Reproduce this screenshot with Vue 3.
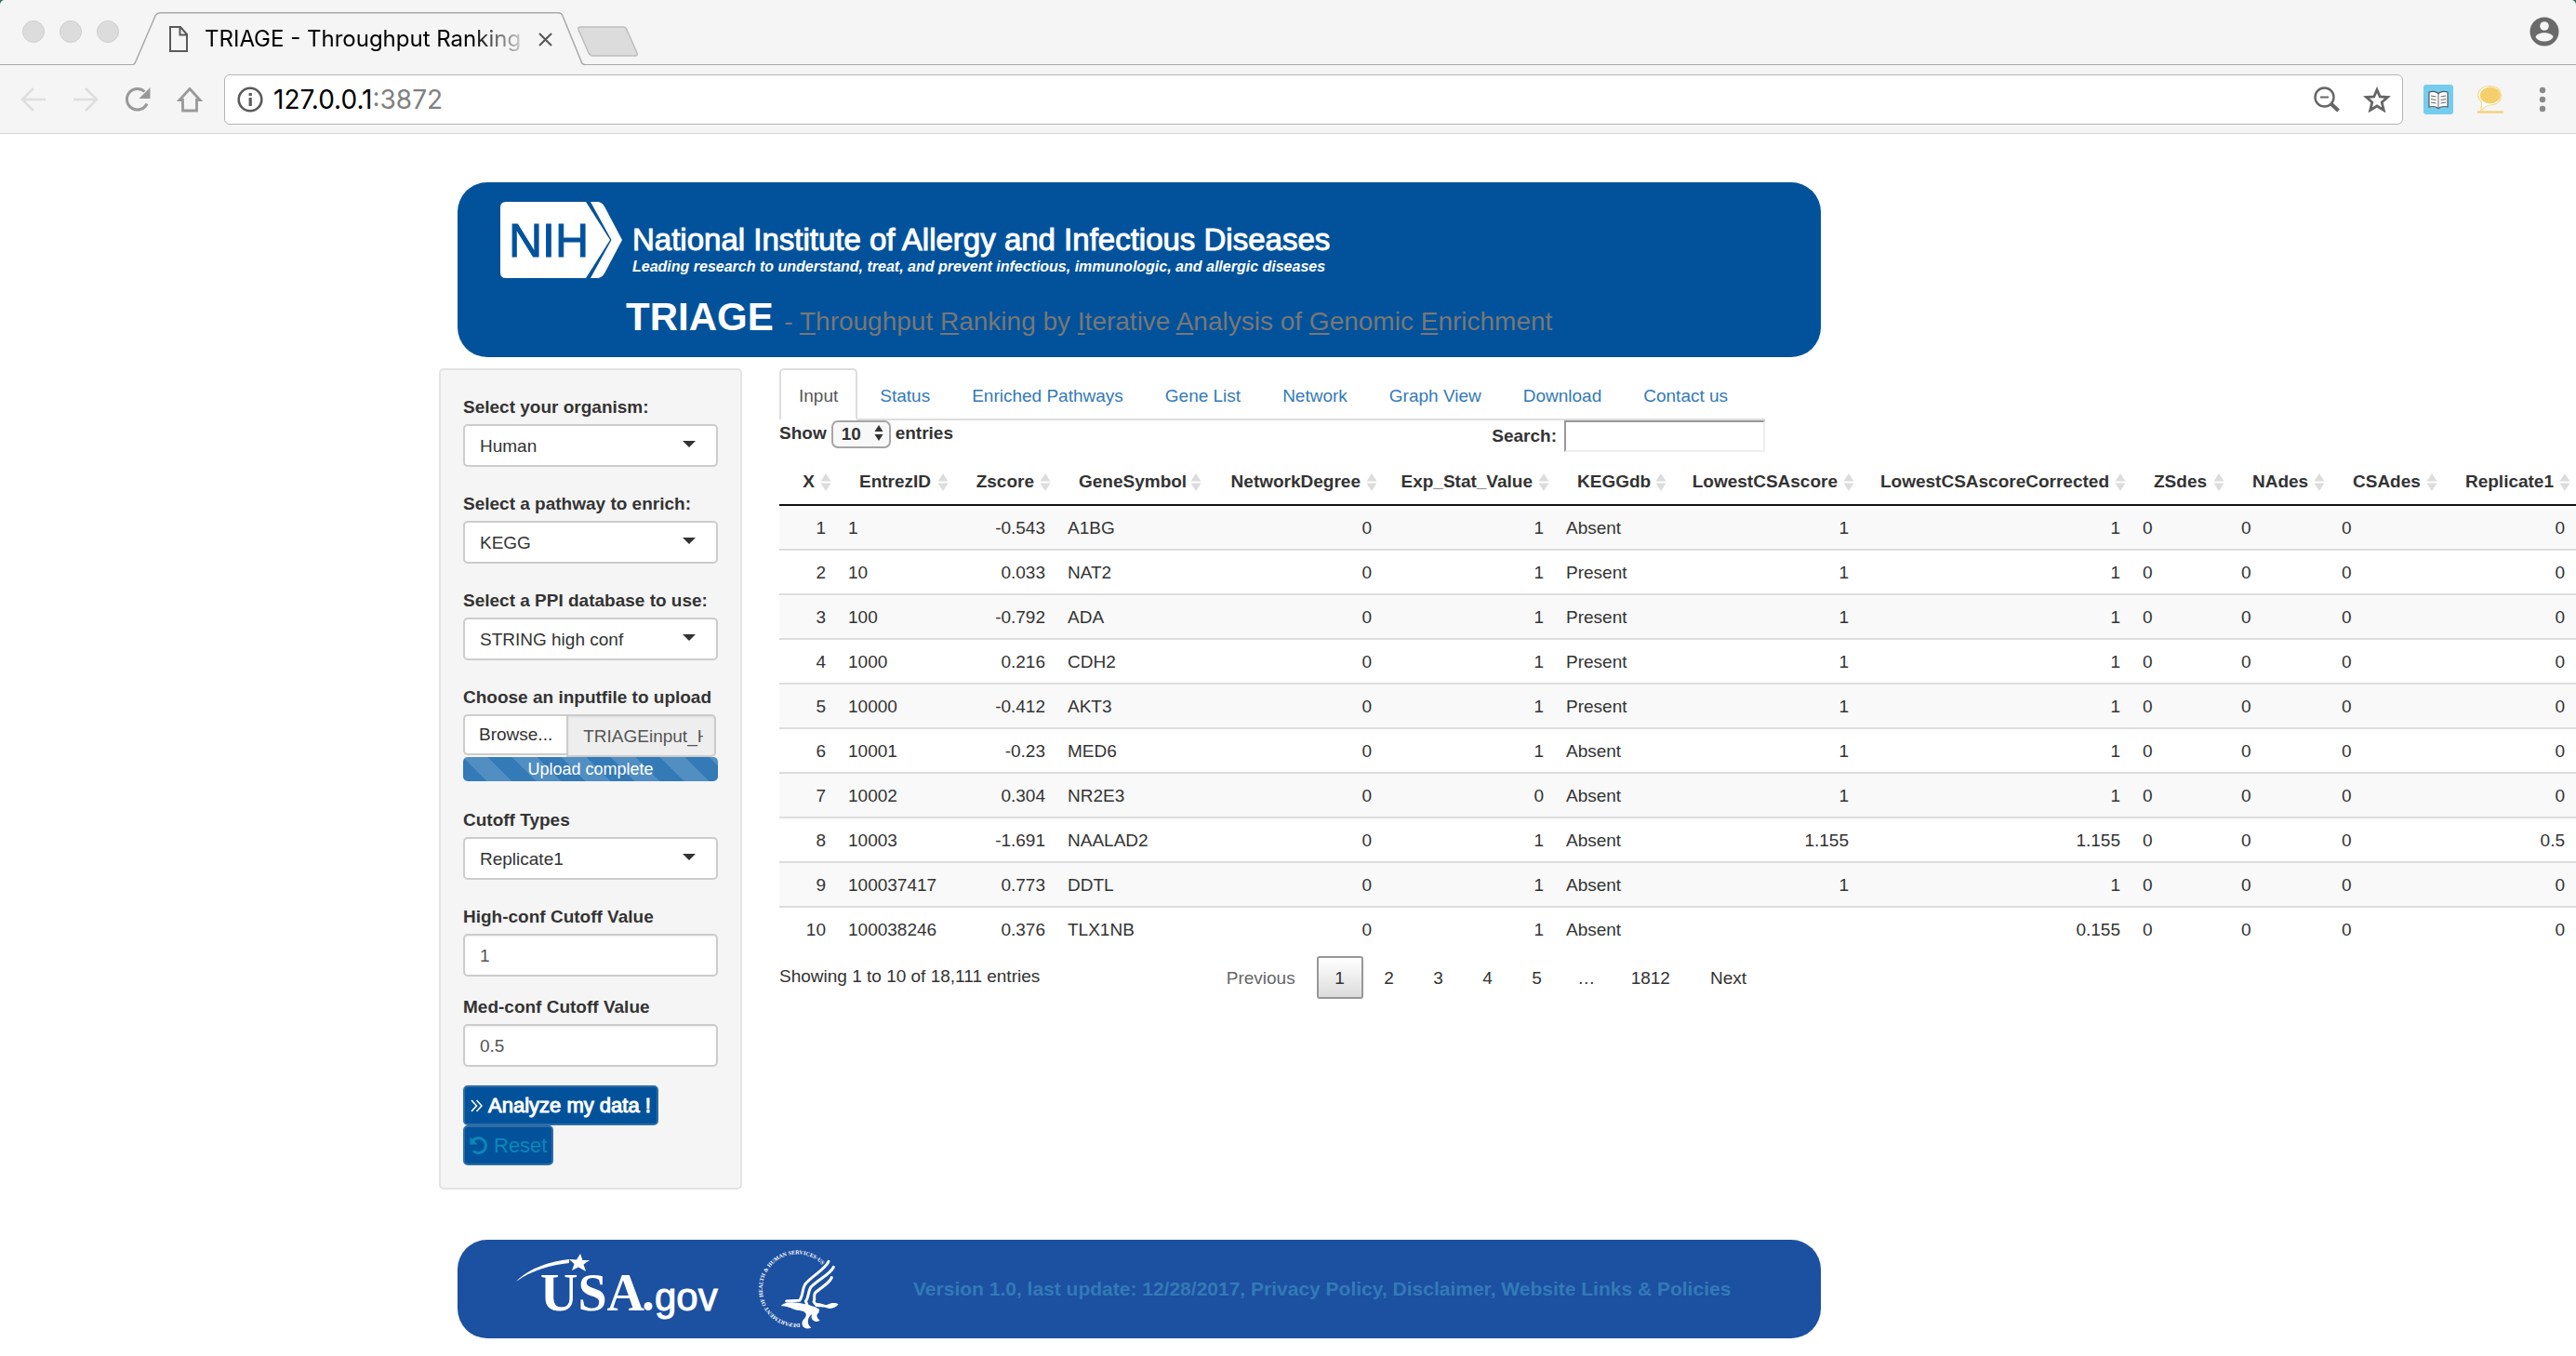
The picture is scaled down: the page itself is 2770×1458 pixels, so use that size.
<script setup>
import { ref } from 'vue'

const organism = ref('Human')
const pathway = ref('KEGG')
const ppi = ref('STRING high conf')
const cutoffType = ref('Replicate1')
const highConf = ref('1')
const medConf = ref('0.5')
const fileName = ref('TRIAGEinput_H')
const search = ref('')
const pageLength = ref('10')
const activeTab = ref('Input')

const tabs = ['Input', 'Status', 'Enriched Pathways', 'Gene List', 'Network', 'Graph View', 'Download', 'Contact us']

const columns = [
  { name: 'X', width: 62, num: true },
  { name: 'EntrezID', width: 126 },
  { name: 'Zscore', width: 110, num: true },
  { name: 'GeneSymbol', width: 162 },
  { name: 'NetworkDegree', width: 189, num: true },
  { name: 'Exp_Stat_Value', width: 185, num: true },
  { name: 'KEGGdb', width: 126 },
  { name: 'LowestCSAscore', width: 202, num: true },
  { name: 'LowestCSAscoreCorrected', width: 292, num: true },
  { name: 'ZSdes', width: 106 },
  { name: 'NAdes', width: 108 },
  { name: 'CSAdes', width: 121 },
  { name: 'Replicate1', width: 143, num: true },
]

const rows = [
  ['1', '1', '-0.543', 'A1BG', '0', '1', 'Absent', '1', '1', '0', '0', '0', '0'],
  ['2', '10', '0.033', 'NAT2', '0', '1', 'Present', '1', '1', '0', '0', '0', '0'],
  ['3', '100', '-0.792', 'ADA', '0', '1', 'Present', '1', '1', '0', '0', '0', '0'],
  ['4', '1000', '0.216', 'CDH2', '0', '1', 'Present', '1', '1', '0', '0', '0', '0'],
  ['5', '10000', '-0.412', 'AKT3', '0', '1', 'Present', '1', '1', '0', '0', '0', '0'],
  ['6', '10001', '-0.23', 'MED6', '0', '1', 'Absent', '1', '1', '0', '0', '0', '0'],
  ['7', '10002', '0.304', 'NR2E3', '0', '0', 'Absent', '1', '1', '0', '0', '0', '0'],
  ['8', '10003', '-1.691', 'NAALAD2', '0', '1', 'Absent', '1.155', '1.155', '0', '0', '0', '0.5'],
  ['9', '100037417', '0.773', 'DDTL', '0', '1', 'Absent', '1', '1', '0', '0', '0', '0'],
  ['10', '100038246', '0.376', 'TLX1NB', '0', '1', 'Absent', '', '0.155', '0', '0', '0', '0'],
]
</script>

<template>
  <div class="window">
    <div class="chrome">
      <div class="tabstrip">
        <div class="lights"><i></i><i></i><i></i></div>
        <div class="browser-tab">
          <svg class="tab-shape" width="486" height="58" viewBox="0 0 486 58">
            <path d="M0 56.500 Q2 56 3 53 L24 4 Q26 0.800 30 0.800 H457 Q461 0.800 462 4 L482 53 Q483 56.500 486 56.500 V58 H0 Z" fill="#f5f5f5" />
            <path d="M0 56.500 Q2 56 3 53 L24 4 Q26 0.800 30 0.800 H457 Q461 0.800 462 4 L482 53 Q483 56.500 486 56.500" fill="none" stroke="#a9a9a9" stroke-width="1.500" />
          </svg>
          <svg class="doc" width="20" height="28" viewBox="0 0 20 28" fill="none" stroke="#5a5a5a" stroke-width="2">
            <path d="M1 1 H12 L19 9 V27 H1 Z M11.500 1 V9.500 H19" />
          </svg>
          <span class="tab-title">TRIAGE - Throughput Ranking</span>
          <button class="tab-close" aria-label="Close tab">
            <svg width="15" height="15" viewBox="0 0 15 15" stroke="#555" stroke-width="2"><path d="M1 1 L14 14 M14 1 L1 14" /></svg>
          </button>
        </div>
        <svg class="new-tab" width="68" height="34" viewBox="0 0 68 34">
          <path d="M4 1 H50 Q53 1 54 4 L65 29 Q66 32 63 32 H18 Q15 32 13 29 L2 4 Q1 1 4 1 Z" fill="#dcdcdc" stroke="#bdbdbd" stroke-width="1.500" />
        </svg>
        <svg class="profile" width="32" height="32" viewBox="0 0 32 32">
          <circle cx="16" cy="16" r="15.500" fill="#6a6a6a" />
          <circle cx="16" cy="10" r="4.800" fill="#f5f5f5" />
          <path d="M6.500 22 C8 15.800 24 15.800 25.500 22 C22 28 10 28 6.500 22 Z" fill="#f5f5f5" />
        </svg>
      </div>
      <div class="toolbar">
        <nav class="nav-icons">
          <svg width="28" height="28" viewBox="0 0 28 28" fill="none" stroke="#dedede" stroke-width="2.500"><path d="M27 14 H2 M14 2 L2 14 L14 26" /></svg>
          <svg width="28" height="28" viewBox="0 0 28 28" fill="none" stroke="#dedede" stroke-width="2.500"><path d="M1 14 H26 M14 2 L26 14 L14 26" /></svg>
          <svg width="28" height="28" viewBox="0 0 28 28"><path d="M24 18.500 A11.300 11.300 0 1 1 21.500 5.500" fill="none" stroke="#999" stroke-width="3" /><path d="M27.500 1 V13 H15.500 Z" fill="#999" /></svg>
          <svg width="28" height="28" viewBox="0 0 28 28" fill="none" stroke="#999" stroke-width="2.800"><path d="M14 2.500 L25 14.500 H21.500 V26 H6.500 V14.500 H3 Z" /></svg>
        </nav>
        <div class="address" role="textbox" aria-label="Address">
          <svg width="28" height="28" viewBox="0 0 28 28"><circle cx="14" cy="14" r="12.300" fill="none" stroke="#5a5a5a" stroke-width="2.600" /><path d="M12.600 12 H15.800 V21 H12.600 Z M12.600 7 H15.800 V10 H12.600 Z" fill="#5a5a5a" /></svg>
          <span class="url">127.0.0.1<span class="port">:3872</span></span>
          <svg class="mag" width="28" height="28" viewBox="0 0 28 28" fill="none" stroke="#666"><circle cx="11.500" cy="11.500" r="10" stroke-width="2.400" /><path d="M7 11.500 H16" stroke-width="2" /><path d="M18.500 18.500 L26.500 26" stroke-width="4" /></svg>
          <svg width="30" height="28" viewBox="0 0 30 28" fill="none" stroke="#666" stroke-width="2.800"><path d="M15 3.500 L18.200 11 L26.500 11.500 L20.200 17 L22.300 25.500 L15 21 L7.700 25.500 L9.800 17 L3.500 11.500 L11.800 11 Z" /></svg>
        </div>
        <div class="extensions">
          <svg width="32" height="32" viewBox="0 0 32 32"><rect width="32" height="32" rx="3" fill="#75cdee" />
            <path d="M6 8 Q12 6 16 9.500 Q20 6 26 8 V24 Q20 22.500 16 25.500 Q12 22.500 6 24 Z" fill="#fff" stroke="#555" stroke-width="1.200" />
            <path d="M16 9.500 V25 M8 12 L13.500 13 M8 15.500 L13.500 16.500 M8 19 L13.500 20 M24 12 L18.500 13 M24 15.500 L18.500 16.500 M24 19 L18.500 20" stroke="#666" stroke-width="1" /></svg>
          <svg width="30" height="32" viewBox="0 0 30 32"><path d="M5.500 19 C-3 10 4 1.500 14.500 1.500 C30 1.500 31 21 15 22 Q10 22 5 28 Z" fill="#fff" stroke="#f5d98c" stroke-width="1.200" /><ellipse cx="14.800" cy="11.500" rx="11" ry="9" fill="#f5cf6c" /><path d="M1 29.500 H29" stroke="#f5cf6c" stroke-width="2.200" /></svg>
          <svg width="8" height="28" viewBox="0 0 8 28" fill="#8a8a8a"><circle cx="4" cy="4" r="3.200" /><circle cx="4" cy="14" r="3.200" /><circle cx="4" cy="24" r="3.200" /></svg>
        </div>
      </div>
    </div>

    <div class="page">
      <header class="banner">
        <div class="brand">
          <svg width="132" height="82" viewBox="0 0 132 82">
            <path d="M6 0 H92 L118 41 L92 82 H6 Q0 82 0 76 V6 Q0 0 6 0 Z" fill="#fff" />
            <path d="M97 0 H104 Q109 0 112 5 L131 41 L112 77 Q109 82 104 82 H97 L119.500 41 Z" fill="#fff" />
            <text x="9" y="59" class="nih">NIH</text>
          </svg>
          <div class="institute">
            <div class="institute-name">National Institute of Allergy and Infectious Diseases</div>
            <div class="institute-tag">Leading research to understand, treat, and prevent infectious, immunologic, and allergic diseases</div>
          </div>
        </div>
        <h1>TRIAGE <small>- <u>T</u>hroughput <u>R</u>anking by <u>I</u>terative <u>A</u>nalysis of <u>G</u>enomic <u>E</u>nrichment</small></h1>
      </header>

      <div class="columns">
        <form class="sidebar" @submit.prevent>
          <div class="group">
            <label for="organism">Select your organism:</label>
            <div class="picker">
              <select id="organism" v-model="organism"><option>Human</option><option>Mouse</option></select>
              <svg width="14" height="7" viewBox="0 0 14 7"><path d="M0 0 H14 L7 7 Z" fill="#333" /></svg>
            </div>
          </div>
          <div class="group">
            <label for="pathway">Select a pathway to enrich:</label>
            <div class="picker">
              <select id="pathway" v-model="pathway"><option>KEGG</option></select>
              <svg width="14" height="7" viewBox="0 0 14 7"><path d="M0 0 H14 L7 7 Z" fill="#333" /></svg>
            </div>
          </div>
          <div class="group">
            <label for="ppi">Select a PPI database to use:</label>
            <div class="picker">
              <select id="ppi" v-model="ppi"><option>STRING high conf</option></select>
              <svg width="14" height="7" viewBox="0 0 14 7"><path d="M0 0 H14 L7 7 Z" fill="#333" /></svg>
            </div>
          </div>
          <div class="group upload-group">
            <label for="file">Choose an inputfile to upload</label>
            <div class="upload">
              <button type="button" class="browse">Browse...</button>
              <input id="file" v-model="fileName" type="text" readonly>
            </div>
            <div class="progress">Upload complete</div>
          </div>
          <div class="group">
            <label for="cutoff">Cutoff Types</label>
            <div class="picker">
              <select id="cutoff" v-model="cutoffType"><option>Replicate1</option></select>
              <svg width="14" height="7" viewBox="0 0 14 7"><path d="M0 0 H14 L7 7 Z" fill="#333" /></svg>
            </div>
          </div>
          <div class="group tight">
            <label for="high">High-conf Cutoff Value</label>
            <input id="high" v-model="highConf" type="text" class="field">
          </div>
          <div class="group tight">
            <label for="med">Med-conf Cutoff Value</label>
            <input id="med" v-model="medConf" type="text" class="field">
          </div>
          <div class="actions">
            <button type="submit" class="action">
              <svg width="13" height="14" viewBox="0 0 13 14" fill="none" stroke="#fff" stroke-width="1.600"><path d="M1 1 L6.500 7 L1 13 M6.500 1 L12 7 L6.500 13" /></svg>
              Analyze my data !
            </button>
            <button type="reset" class="action reset">
              <svg width="20" height="20" viewBox="0 0 20 20"><path d="M3 5 A8 8 0 1 1 4 15.500" fill="none" stroke="#0b87b8" stroke-width="3" /><path d="M0.500 0.500 V8.500 H8.500 Z" fill="#0b87b8" /></svg>
              Reset
            </button>
          </div>
        </form>

        <main class="main">
          <ul class="tabs">
            <li v-for="t in tabs" :key="t"><a href="#" :class="{ active: t === activeTab }" @click.prevent="activeTab = t">{{ t }}</a></li>
          </ul>

          <div class="controls">
            <label class="length">Show
              <span class="length-box">
                <select v-model="pageLength"><option>10</option><option>25</option></select>
                <svg width="10" height="17" viewBox="0 0 10 17" fill="#333"><path d="M0.500 7 L5 0 L9.500 7 Z M0.500 10 L5 17 L9.500 10 Z" /></svg>
              </span>
              entries</label>
            <label class="search">Search:<input v-model="search" type="search"></label>
          </div>

          <table>
            <colgroup><col v-for="c in columns" :key="c.name" :style="{ width: c.width + 'px' }"></colgroup>
            <thead>
              <tr>
                <th v-for="c in columns" :key="c.name" :class="{ num: c.num }">
                  {{ c.name }}<svg width="12" height="19" viewBox="0 0 12 19" fill="#dcdcdc"><path d="M0.500 8.500 L6 0 L11.500 8.500 Z M0.500 10.500 L6 19 L11.500 10.500 Z" /></svg>
                </th>
              </tr>
            </thead>
            <tbody>
              <tr v-for="row in rows" :key="row[0]">
                <td v-for="(cell, i) in row" :key="i" :class="{ num: columns[i].num }">{{ cell }}</td>
              </tr>
            </tbody>
          </table>

          <div class="table-foot">
            <span class="info">Showing 1 to 10 of 18,111 entries</span>
            <div class="pager">
              <button class="wide muted">Previous</button>
              <button class="current">1</button>
              <button>2</button>
              <button>3</button>
              <button>4</button>
              <button>5</button>
              <span class="dots">…</span>
              <button class="wide">1812</button>
              <button class="wide">Next</button>
            </div>
          </div>
        </main>
      </div>

      <footer class="footer">
        <svg class="usa" width="220" height="76" viewBox="0 0 220 76" fill="#fff">
          <path d="M0 30 C14 15 38 8 57 6 L57 10 C38 12 16 18 0 30 Z" />
          <path d="M69 0 L71.500 7 L79 7 L72.500 11.500 L75 19 L67 14.500 L60 18 L62.500 11 L57 6 L65 6.500 Z" />
          <text x="26" y="61" class="usa-serif">USA</text>
          <circle cx="142" cy="56.500" r="4.500" />
          <text x="149" y="61" class="usa-sans">gov</text>
        </svg>
        <svg class="hhs" width="90" height="90" viewBox="0 0 270 270">
          <defs><path id="hhs-arc" d="M142 246 A112 112 0 1 1 216 60" /></defs>
          <text class="hhs-text"><textPath href="#hhs-arc">DEPARTMENT OF HEALTH &amp; HUMAN SERVICES·USA</textPath></text>
          <g fill="none" stroke="#fff" stroke-width="9" stroke-linecap="round" stroke-linejoin="round">
            <path d="M234 46 C224 72 180 92 158 120 C148 136 152 158 140 172 L98 174" />
            <path d="M250 64 C240 88 196 106 176 130 C166 148 170 164 160 174 L168 194" />
            <path d="M244 98 C236 118 206 132 190 148 C184 160 192 168 186 176 L196 188" />
          </g>
          <g fill="#fff">
            <path d="M80 190 C90 176 116 176 140 180 C160 184 184 188 204 200 L202 212 C190 218 200 232 206 236 C190 246 174 234 180 216 C168 224 160 246 178 260 C150 270 140 244 156 230 C168 218 160 206 140 204 C120 204 104 188 80 190 Z" />
            <path d="M192 180 C214 180 224 190 234 184 C246 178 258 180 266 184 C256 198 240 200 228 196 C214 192 204 196 194 190 Z" />
          </g>
        </svg>
        <a href="#">Version 1.0, last update: 12/28/2017, Privacy Policy, Disclaimer, Website Links &amp; Policies</a>
      </footer>
    </div>
  </div>
</template>

<style>
body { margin: 0; background: #fff; }
</style>

<style scoped>
.window, .window * { box-sizing: border-box; }
.window {
  font-family: "Liberation Sans", Arial, Helvetica, sans-serif;
  font-size: 19px;
  line-height: 26px;
  color: #333;
  overflow-x: clip;
}
svg { display: block; flex: none; }
button { font: inherit; color: inherit; cursor: pointer; }

.chrome { background: #2d6b5c; font-family: Inter, Roboto, sans-serif; }
.tabstrip {
  display: flex;
  height: 70px;
  padding: 0 18px 0 24px;
  background: #f5f5f5;
  border-bottom: 1px solid #a9a9a9;
  border-radius: 5px 5px 0 0;
}
.lights { display: flex; gap: 16px; padding-top: 22px; width: 119px; }
.lights i { width: 24px; height: 24px; border-radius: 50%; background: #dcdcdc; border: 1px solid #cfcfcf; }
.browser-tab {
  position: relative;
  display: flex;
  align-items: center;
  width: 486px;
  height: 58px;
  margin-top: 13px;
  padding: 0 30px 0 39px;
}
.tab-shape { position: absolute; left: 0; top: 0; }
.doc { position: relative; }
.tab-title {
  position: relative;
  flex: 1;
  margin-left: 18px;
  white-space: nowrap;
  font-size: 24px;
  line-height: 32px;
  color: #000;
  mask-image: linear-gradient(to right, #000 82%, transparent);
}
.tab-close { position: relative; border: 0; padding: 0; margin: 0 5px 0 8px; background: none; }
.new-tab { margin-top: 28px; margin-left: -9px; }
.profile { margin: 18px 0 0 auto; }
.toolbar {
  display: flex;
  align-items: center;
  height: 74px;
  padding: 0 32px 0 22px;
  background: #f5f5f5;
  border-bottom: 1px solid #d4d4d4;
}
.nav-icons { display: flex; gap: 28px; width: 219px; }
.address {
  flex: 1;
  display: flex;
  align-items: center;
  height: 54px;
  padding: 0 12px 0 13px;
  background: #fff;
  border: 1px solid #b4b4b4;
  border-radius: 6px;
}
.url { margin-left: 11px; font-size: 28px; line-height: 36px; color: #000; }
.port { color: #808080; }
.mag { margin-left: auto; margin-right: 25px; }
.extensions { display: flex; align-items: center; gap: 25px; margin-left: 22px; }
.extensions svg:last-child { margin-left: 12px; }

.page { max-width: 1826px; margin: 0 auto; padding: 52px 0 18px; }
.banner {
  max-width: 1466px;
  height: 188px;
  margin: 0 20px 12px;
  padding: 21px 0 0 46px;
  border-radius: 32px;
  background: #02529b;
  color: #fff;
}
.brand { display: flex; gap: 10px; }
.nih { font-size: 50px; fill: #02529b; stroke: #02529b; stroke-width: 1; }
.institute { padding-top: 22px; white-space: nowrap; }
.institute-name { font-size: 33px; line-height: 38px; -webkit-text-stroke: 1px #fff; }
.institute-tag { font-size: 16px; line-height: 20px; font-weight: bold; font-style: italic; }
h1 { margin: 18px 0 0 135px; font-size: 42px; line-height: 48px; font-weight: bold; white-space: nowrap; }
h1 small { font-size: 28px; font-weight: normal; color: #777; }
u { text-decoration-thickness: 2px; text-underline-offset: 3px; }

.columns { display: flex; align-items: flex-start; gap: 40px; }
.sidebar {
  flex: none;
  width: 326px;
  padding: 27px 24px 24px;
  background: #f5f5f5;
  border: 2px solid #e3e3e3;
  border-radius: 5px;
}
.group { margin-bottom: 27px; }
.group.upload-group { margin-bottom: 29px; }
.group.tight { margin-bottom: 20px; }
.group label { display: block; margin-bottom: 5px; font-weight: bold; white-space: nowrap; }
.picker { position: relative; }
.picker svg { position: absolute; right: 24px; top: 18px; pointer-events: none; }
.picker select, .field, .upload input {
  display: block;
  width: 100%;
  height: 46px;
  padding: 1px 16px 0;
  font: inherit;
  color: #333;
  background: #fff;
  border: 2px solid #ccc;
  border-radius: 5px;
  appearance: none;
}
.field { color: #555; box-shadow: inset 0 1px 2px rgba(0, 0, 0, 0.08); }
.upload { display: flex; padding-right: 2px; }
.upload .browse {
  height: 44px;
  padding: 0 15px;
  background: #fff;
  border: 2px solid #ccc;
  border-right: 0;
  border-radius: 5px 0 0 5px;
}
.upload input {
  flex: 1;
  min-width: 0;
  padding: 1px 12px 0 16px;
  background: #eee;
  color: #555;
  border-radius: 0 5px 5px 0;
  box-shadow: inset 0 1px 2px rgba(0, 0, 0, 0.08);
}
.progress {
  height: 26px;
  border-radius: 5px;
  text-align: center;
  font-size: 18px;
  line-height: 27px;
  color: #fff;
  background-color: #337ab7;
  background-image: linear-gradient(45deg, rgba(255,255,255,.15) 25%, transparent 25%, transparent 50%, rgba(255,255,255,.15) 50%, rgba(255,255,255,.15) 75%, transparent 75%, transparent);
  background-size: 53px 53px;
}
.actions { display: flex; flex-direction: column; align-items: flex-start; }
.action {
  display: flex;
  align-items: center;
  gap: 6px;
  height: 43px;
  padding: 0 6px;
  font-size: 22px;
  color: #fff;
  background: #02529b;
  border: 2px solid #2e6da4;
  border-radius: 5px;
  -webkit-text-stroke: 1px currentColor;
}
.action.reset { padding: 0 5px; color: #0b87b8; -webkit-text-stroke: 0; }

.main { flex: none; width: 1060px; }
.tabs {
  display: flex;
  gap: 3px;
  margin: 0;
  padding: 0;
  height: 56px;
  list-style: none;
  border-bottom: 2px solid #ddd;
}
.tabs a {
  display: block;
  height: 56px;
  padding: 15px 19px 0;
  border: 2px solid transparent;
  border-radius: 5px 5px 0 0;
  color: #337ab7;
  text-decoration: none;
  white-space: nowrap;
}
.tabs a.active { color: #555; background: #fff; border-color: #ddd #ddd #fff; }
.controls { display: flex; justify-content: space-between; height: 42px; font-weight: bold; }
.length { display: flex; gap: 5px; align-items: center; height: 28px; }
.length-box { position: relative; height: 30px; margin-top: 2px; }
.length-box select {
  width: 64px;
  height: 30px;
  padding: 0 9px;
  font: inherit;
  color: #333;
  background: #f8f8f8;
  border: 2px solid #a6a6a6;
  border-radius: 7px;
  appearance: none;
}
.length-box svg { position: absolute; right: 8px; top: 5px; pointer-events: none; }
.search { display: flex; gap: 8px; align-items: center; height: 34px; }
.search input {
  width: 216px;
  height: 34px;
  padding: 0 4px;
  font: inherit;
  background: #fff;
  border: 2px solid;
  border-color: #999 #eee #eee #999;
  border-radius: 0;
  appearance: none;
}

table { width: 1932px; table-layout: fixed; border-collapse: separate; border-spacing: 0; }
th, td { white-space: nowrap; text-align: left; }
th {
  position: relative;
  height: 50px;
  padding: 0 0 0 24px;
  border-bottom: 2px solid #111;
}
th.num { padding: 0 24px 0 0; text-align: right; }
th svg { position: absolute; right: 6px; top: 15px; }
td { height: 48px; padding: 2px 12px 0; border-bottom: 2px solid #ddd; }
tbody tr:nth-child(odd) td { background: #f9f9f9; }
tbody tr:last-child td { border-bottom-color: transparent; }
.num { text-align: right; }

.table-foot { display: flex; justify-content: space-between; padding-top: 4px; }
.info { padding-top: 9px; }
.pager { display: flex; gap: 3px; }
.pager button, .pager .dots {
  width: 50px;
  height: 46px;
  padding: 0;
  line-height: 44px;
  text-align: center;
  background: none;
  border: 2px solid transparent;
  border-radius: 3px;
}
.pager .wide { width: auto; padding: 0 18px; }
.pager .muted { color: #666; }
.pager .current { border-color: #979797; background: linear-gradient(#fff, #dcdcdc); }

.footer {
  display: flex;
  align-items: center;
  max-width: 1466px;
  height: 106px;
  margin: 54px 20px 0;
  padding-left: 63px;
  border-radius: 32px;
  background: #1c50a1;
}
.usa-serif { font: bold 56px "Liberation Serif", serif; }
.usa-sans { font: 42px "Liberation Sans", sans-serif; stroke: #fff; stroke-width: 1; }
.hhs { margin-left: 38px; overflow: visible; }
.hhs-text { font: bold 18px "Liberation Serif", serif; fill: #fff; }
.footer a { margin-left: 79px; color: #337ab7; font-weight: bold; font-size: 21px; text-decoration: none; white-space: nowrap; }
</style>
